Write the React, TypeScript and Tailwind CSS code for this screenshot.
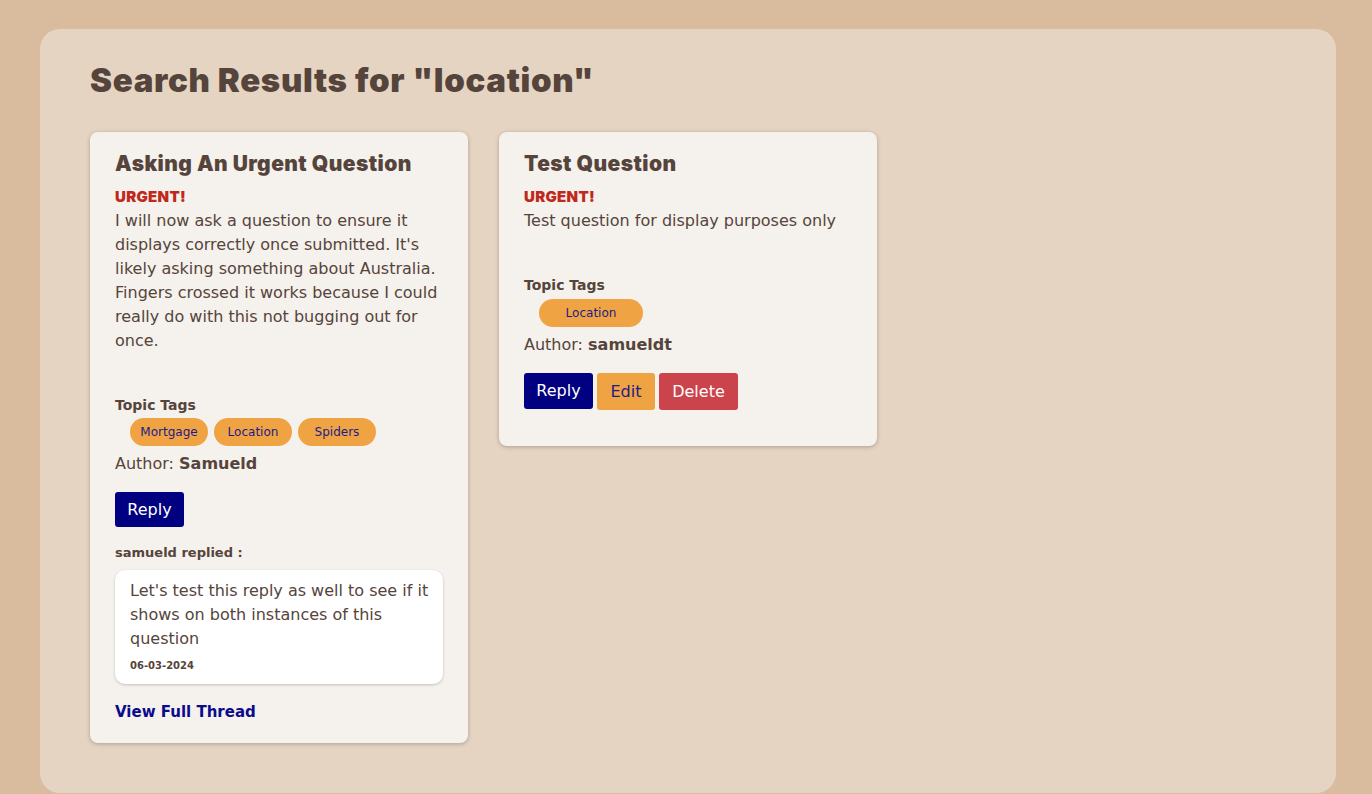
import React from "react";

const body = { fontFamily: '"DejaVu Sans", "Noto Sans", sans-serif' };
const head = { fontFamily: 'Inter, "Liberation Sans", sans-serif' };

function Tag({ label, w }: { label: string; w: string }) {
  return (
    <span
      className={`inline-flex h-[28px] items-center justify-center rounded-full bg-[#f0a342] text-[12px] text-[#1c1c8a] ${w}`}
    >
      {label}
    </span>
  );
}

export default function App() {
  return (
    <div className="min-h-[794px] bg-[#d9bb9e] pl-[40px] pr-[36px] pt-[29px] pb-px" style={body}>
      <div className="h-[764px] rounded-[20px] bg-[#e6d4c2] px-[50px] pt-[31px] text-[#55443b]">
        <h1 className="text-[33px] font-black leading-[40px] tracking-[0.02em]" style={head}>
          Search Results for "location"
        </h1>
        <div className="mt-[32px] flex items-start gap-[31px]">
          {/* Card 1 */}
          <div className="w-[378px] rounded-[8px] bg-[#f5f1ec] px-[25px] pt-[18px] pb-[20px] shadow-[0_1px_4px_rgba(0,0,0,0.25)]">
            <h2 className="text-[21px] font-black leading-[28px] tracking-[0.02em]" style={head}>
              Asking An Urgent Question
            </h2>
            <div className="mt-[9px] text-[15px] font-black leading-[20px] tracking-[0.02em] text-[#c0281c]" style={head}>
              URGENT!
            </div>
            <p className="mt-[2px] text-[16px] leading-[24px]">
              I will now ask a question to ensure it displays correctly once submitted. It's likely asking something about Australia. Fingers crossed it works because I could really do with this not bugging out for once.
            </p>
            <div className="mt-[43px] text-[14px] font-bold leading-[18px]">Topic Tags</div>
            <div className="mt-[4px] flex gap-[6px] pl-[15px]">
              <Tag label="Mortgage" w="w-[78px]" />
              <Tag label="Location" w="w-[78px]" />
              <Tag label="Spiders" w="w-[78px]" />
            </div>
            <div className="mt-[6px] text-[16px] leading-[24px]">
              Author: <span className="font-bold">Samueld</span>
            </div>
            <button className="mt-[16px] block h-[35px] w-[69px] rounded-[3px] bg-[#000080] text-[16px] text-white">
              Reply
            </button>
            <div className="mt-[17px] text-[13px] font-bold leading-[18px]">samueld replied :</div>
            <div className="mt-[8px] rounded-[10px] bg-white pl-[15px] pr-[8px] pt-[9px] pb-[11px] shadow-[0_1px_3px_rgba(0,0,0,0.2)]">
              <p className="text-[16px] leading-[24px]">
                Let's test this reply as well to see if it shows on both instances of this question
              </p>
              <div className="mt-[8px] text-[10px] font-bold leading-[14px]">06-03-2024</div>
            </div>
            <div className="mt-[17px] text-[15px] font-bold leading-[22px] text-[#0a0a8c]">View Full Thread</div>
          </div>

          {/* Card 2 */}
          <div className="w-[378px] rounded-[8px] bg-[#f5f1ec] px-[25px] pt-[18px] pb-[36px] shadow-[0_1px_4px_rgba(0,0,0,0.25)]">
            <h2 className="text-[21px] font-black leading-[28px] tracking-[0.02em]" style={head}>
              Test Question
            </h2>
            <div className="mt-[9px] text-[15px] font-black leading-[20px] tracking-[0.02em] text-[#c0281c]" style={head}>
              URGENT!
            </div>
            <p className="mt-[2px] text-[16px] leading-[24px]">Test question for display purposes only</p>
            <div className="mt-[43px] text-[14px] font-bold leading-[18px]">Topic Tags</div>
            <div className="mt-[5px] flex gap-[6px] pl-[15px]">
              <Tag label="Location" w="w-[104px]" />
            </div>
            <div className="mt-[6px] text-[16px] leading-[24px]">
              Author: <span className="font-bold">samueldt</span>
            </div>
            <div className="mt-[16px] flex gap-[4px]">
              <button className="h-[36px] w-[69px] rounded-[3px] bg-[#000080] text-[16px] text-white">Reply</button>
              <button className="h-[37px] w-[58px] rounded-[3px] bg-[#f0a342] text-[16px] text-[#1c1c8a]">Edit</button>
              <button className="h-[37px] w-[79px] rounded-[3px] bg-[#cc444b] text-[16px] text-white">Delete</button>
            </div>
          </div>
        </div>
      </div>
    </div>
  );
}
